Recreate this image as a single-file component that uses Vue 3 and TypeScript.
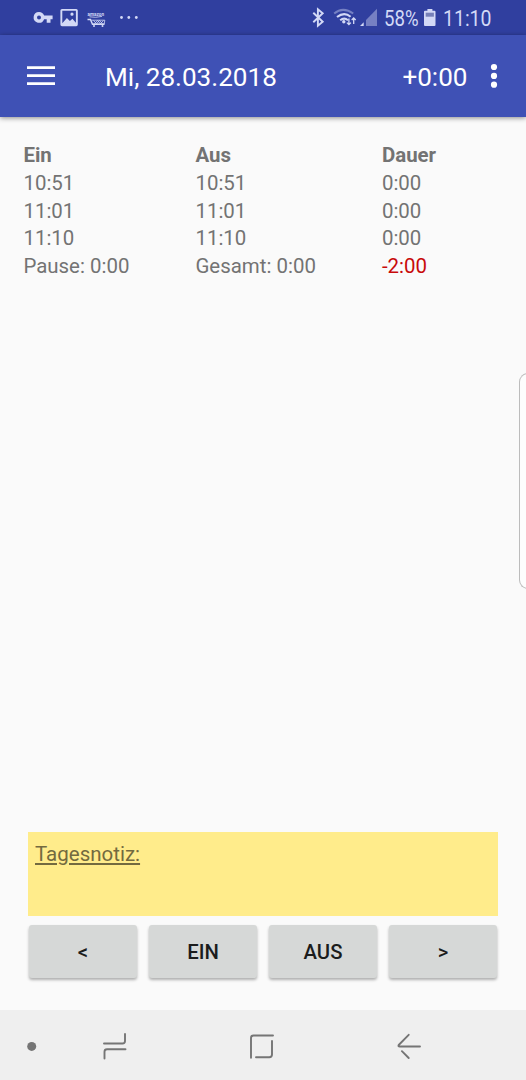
<script setup lang="ts">
interface Row {
  ein: string
  aus: string
  dauer: string
}

const rows: Row[] = [
  { ein: '10:51', aus: '10:51', dauer: '0:00' },
  { ein: '11:01', aus: '11:01', dauer: '0:00' },
  { ein: '11:10', aus: '11:10', dauer: '0:00' },
]

const actions: string[] = ['<', 'EIN', 'AUS', '>']
</script>

<template>
  <div class="screen">
    <header class="status">
      <svg class="status-left" width="120" height="35" viewBox="0 0 120 35">
        <path
          fill-rule="evenodd"
          d="M5 12a5.400 5.400 0 1 0 5.100 7.200h2.600v3.600h3.800v-3.600h2.100v-3.700h-8.500A5.400 5.400 0 0 0 5 12zm0 3.500a2 2 0 1 1 0 4 2 2 0 0 1 0-4z"
        />
        <path
          fill-rule="evenodd"
          d="M28 9h14.200a1.600 1.600 0 0 1 1.600 1.600v14a1.600 1.600 0 0 1-1.600 1.600H28a1.600 1.600 0 0 1-1.600-1.600v-14A1.600 1.600 0 0 1 28 9zm.3 1.800v12.500l4.600-5.200 3 3 2.500-2.400 3.500 4V10.800zM38 12.600a1.600 1.600 0 1 1 0 3.200 1.600 1.600 0 0 1 0-3.200z"
        />
        <text class="tiny" x="53.500" y="15.600" textLength="16.500" lengthAdjust="spacingAndGlyphs">amazon</text>
        <path class="line thin" d="M55.500 16.800q6 1.200 12.500-.4" />
        <path class="line" d="M53.500 19.500h3l2 4.800h12" />
        <path class="line thin" d="M57.500 20.200h13.300l-.6 3.800H59M59.500 20.500l3 3.200 3-3.200 3 3.200M60.500 23.700l3-3.200 3 3.200 3-3.200" />
        <circle cx="60" cy="26" r="1" />
        <circle cx="68.500" cy="26" r="1" />
        <circle cx="87.500" cy="17.500" r="1.400" />
        <circle cx="94.800" cy="17.500" r="1.400" />
        <circle cx="102.300" cy="17.500" r="1.400" />
      </svg>
      <div class="status-right">
        <svg width="66" height="35" viewBox="0 0 66 35">
          <path class="line blue" d="M1.300 12.800l9.400 9-4.800 3.900V9.200l4.800 4-9.400 9" />
          <path class="line wifi faint" d="M22.200 13.500q8.800-7.200 19 0" />
          <path class="line wifi" d="M25 17q7.200-5.500 13.600-.3M28.200 20.200q4-3.200 7.800 0" />
          <circle cx="31.800" cy="21.800" r="1.700" />
          <path class="line arrows" d="M36.900 18.500v6M34.900 22.600l2 2 2-2M41.700 24v-6M39.700 20l2-2 2 2" />
          <path d="M51.700 22.300v3.700H48z" />
          <path class="faint-fill" d="M65 8.800V26H54v-5.900z" />
        </svg>
        <svg class="pct" width="36" height="35">
          <text x="0" y="26" textLength="34.500" lengthAdjust="spacingAndGlyphs">58%</text>
        </svg>
        <svg class="battery" width="12" height="35" viewBox="0 0 12 35">
          <path d="M3.400 9h5v1.800h2.100a1 1 0 0 1 1 1V25a1 1 0 0 1-1 1H1a1 1 0 0 1-1-1V11.800a1 1 0 0 1 1-1h2.400z" />
          <path class="empty" d="M1.700 12.700h8.200v4H1.700z" />
        </svg>
        <svg class="clock" width="50" height="35">
          <text x="0" y="26" textLength="48.500" lengthAdjust="spacingAndGlyphs">11:10</text>
        </svg>
      </div>
    </header>

    <div class="appbar">
      <svg class="burger" width="28" height="20" viewBox="0 0 28 20">
        <path d="M0 .3h28v2.800H0zM0 8.300h28v2.800H0zM0 16.200h28V19H0z" />
      </svg>
      <h1 class="title">Mi, 28.03.2018</h1>
      <span class="balance">+0:00</span>
      <svg class="more" width="8" height="26" viewBox="0 0 8 26">
        <circle cx="4" cy="4" r="3.100" />
        <circle cx="4" cy="12.900" r="3.100" />
        <circle cx="4" cy="21.700" r="3.100" />
      </svg>
    </div>

    <main class="content">
      <div class="times">
        <b>Ein</b><b>Aus</b><b>Dauer</b>
        <template v-for="row in rows" :key="row.ein">
          <span>{{ row.ein }}</span><span>{{ row.aus }}</span><span>{{ row.dauer }}</span>
        </template>
        <span>Pause: 0:00</span><span>Gesamt: 0:00</span><span class="negative">-2:00</span>
      </div>
      <div class="edge-handle"></div>
      <section class="note"><span>Tagesnotiz:</span></section>
      <div class="actions">
        <button v-for="label in actions" :key="label" type="button">{{ label }}</button>
      </div>
    </main>

    <nav class="navbar">
      <svg width="526" height="70" viewBox="0 0 526 70">
        <circle cx="31.700" cy="36.400" r="4.500" />
        <path class="nav" d="M104 33.500h18.500q2.500 0 2.500-2.500v-7M125.500 39.300H107q-2.500 0-2.500 2.500V48.500" />
        <path class="nav" d="M273 25.500h-19.500q-2.500 0-2.500 2.500V47.800M272 31v13.500q0 2.700-2.700 2.700H256" />
        <path class="nav" d="M408.700 24.800L398.700 35q-.8 1.500 1 1.500H420M401.900 41.200l6.800 6.800" />
      </svg>
    </nav>
  </div>
</template>

<style>
html,
body {
  margin: 0;
  background: #fafafa;
}
</style>

<style scoped>
.screen {
  position: relative;
  display: flex;
  flex-direction: column;
  width: 526px;
  height: 1080px;
  overflow: hidden;
  background: #fafafa;
  color: #737373;
  font-family: Roboto, 'Liberation Sans', sans-serif;
}

svg {
  display: block;
  flex: none;
  overflow: visible;
}

.status {
  display: flex;
  justify-content: space-between;
  height: 35px;
  box-sizing: border-box;
  padding: 0 33px 0 34px;
  background: #303f9f;
  fill: #d3d9f6;
}

.status-right {
  display: flex;
}

.status text {
  font-size: 22px;
}

.status .tiny {
  font-size: 6px;
  font-weight: 700;
}

.line {
  fill: none;
  stroke: #d3d9f6;
  stroke-width: 1.5;
}

.thin {
  stroke-width: 0.8;
}

.blue {
  stroke-width: 1.9;
}

.wifi {
  stroke-width: 2.1;
}

.faint {
  stroke: #7580c3;
}

.faint-fill {
  fill: #7680c3;
}

.arrows {
  stroke-width: 1.3;
}

.pct {
  margin-left: 6px;
}

.battery {
  margin-left: 4px;
}

.battery .empty {
  fill: #7680b8;
}

.clock {
  margin-left: 7px;
}

.appbar {
  display: flex;
  align-items: center;
  flex: none;
  height: 82px;
  box-sizing: border-box;
  padding: 0 28px 0 27px;
  background: #3f51b5;
  box-shadow: 0 1px 5px rgba(0, 0, 0, 0.45);
  color: #fff;
  fill: #fff;
}

.title,
.balance {
  margin: 2px 0 0;
  font-size: 26.1px;
  font-weight: 400;
  line-height: 32px;
  white-space: nowrap;
}

.title {
  margin-left: 50px;
}

.balance {
  margin-left: auto;
}

.more {
  margin-left: 22.5px;
}

.content {
  display: flex;
  flex: 1;
  flex-direction: column;
  padding: 25px 28px 0 24px;
}

.times {
  display: grid;
  grid-template-columns: 172px 186.5px 1fr;
  grid-auto-rows: 27.8px;
  margin-left: -0.6px;
  font-size: 20.45px;
  line-height: 27.8px;
}

.times b {
  font-weight: 700;
}

.times .negative {
  color: #c80a0a;
}

.edge-handle {
  position: absolute;
  top: 373px;
  right: -2px;
  width: 8px;
  height: 214px;
  border: 1px solid #bcbcbc;
  border-right: 0;
  border-radius: 9px 0 0 9px;
  background: #fdfdfd;
}

.note {
  height: 84px;
  box-sizing: border-box;
  margin-top: auto;
  margin-left: 4px;
  padding: 9px 7px;
  background: #ffec8b;
  color: #736a3f;
  font-size: 20.5px;
  line-height: 27px;
}

.note span {
  text-decoration: underline;
}

.actions {
  display: grid;
  grid-template-columns: repeat(4, 108px);
  gap: 12px;
  margin: 9.400px 0 31.600px 5px;
}

.actions button {
  height: 53px;
  border: 0;
  border-radius: 3px;
  padding: 0;
  background: #d6d8d7;
  box-shadow: 0 2px 3px rgba(0, 0, 0, 0.3);
  color: #1b1c1c;
  font: 500 20.3px Roboto, 'Liberation Sans', sans-serif;
}

.navbar {
  flex: none;
  height: 70px;
  background: #efefef;
  fill: #757575;
}

.nav {
  fill: none;
  stroke: #757575;
  stroke-width: 1.9;
  stroke-linecap: round;
  stroke-linejoin: round;
}
</style>
